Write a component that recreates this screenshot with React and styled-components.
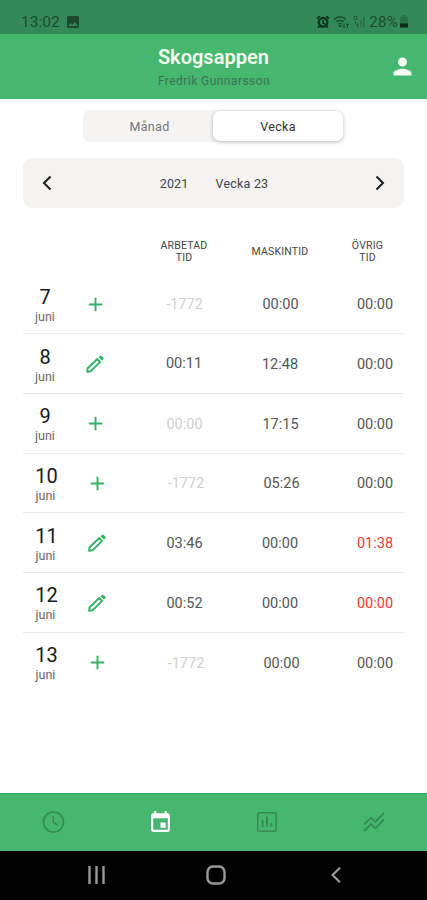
import React from "react";
import styled, { createGlobalStyle } from "styled-components";
import { MdPerson, MdAdd, MdPhoto, MdEvent } from "react-icons/md";

const Global = createGlobalStyle`
  *, *::before, *::after { box-sizing: border-box; }
  body { margin: 0; background: #fff; font-family: Roboto, "Liberation Sans", sans-serif; }
`;

const Screen = styled.div`
  width: 427px;
  height: 900px;
  display: flex;
  flex-direction: column;
  background: #fff;
  overflow: hidden;
`;

const StatusBar = styled.div`
  height: 34px;
  flex: none;
  display: flex;
  align-items: center;
  padding: 9px 18px 0 21px;
  background: #348a57;
  color: #1b4a2d;
  font-size: 15.5px;
  line-height: 20px;
`;

const Clock = styled.span`
  margin-right: 5px;
`;

const StatusIcons = styled.div`
  margin-left: auto;
  display: flex;
  align-items: center;
  gap: 3px;
`;

const Battery = styled.span`
  font-size: 15px;
  letter-spacing: 0.3px;
  margin-right: -2px;
`;

const Header = styled.header`
  height: 65px;
  flex: none;
  display: grid;
  grid-template-columns: 1fr auto 1fr;
  align-items: center;
  padding: 0 14px;
  background: #45b76e;
`;

const Heading = styled.div`
  grid-column: 2;
  padding-left: 1px;
`;

const Title = styled.h1`
  margin: 0;
  font-size: 20px;
  line-height: 26px;
  font-weight: 600;
  letter-spacing: 0;
  color: #f4fff0;
`;

const UserName = styled.div`
  margin-top: 2px;
  font-size: 12px;
  line-height: 18px;
  letter-spacing: 0.45px;
  color: #3d7354;
`;

const Profile = styled.div`
  justify-self: end;
  display: flex;
  margin: 0 -3px 0 0;
  color: #fafff4;
`;

const Content = styled.main`
  flex: 1;
  padding: 11px 23px 0;
`;

const Segments = styled.div`
  display: flex;
  width: 260px;
  height: 32px;
  margin: 0 0 0 60px;
  border-radius: 7px;
  background: #f5f4f3;
`;

const Segment = styled.div`
  flex: ${(p) => (p.$active ? "0 0 130px" : "1")};
  display: flex;
  align-items: center;
  justify-content: center;
  padding-left: ${(p) => (p.$active ? 0 : "3px")};
  font-size: 12.5px;
  letter-spacing: 0.3px;
  border-radius: 7px;
  height: ${(p) => (p.$active ? "30px" : "32px")};
  margin-top: ${(p) => (p.$active ? "1px" : 0)};
  color: ${(p) => (p.$active ? "#333" : "#747474")};
  background: ${(p) => (p.$active ? "#fff" : "transparent")};
  box-shadow: ${(p) => (p.$active ? "0 1px 4px rgba(0,0,0,.25)" : "none")};
`;

const PeriodBar = styled.div`
  display: flex;
  align-items: center;
  justify-content: space-between;
  height: 50px;
  margin-top: 16px;
  padding: 0 19px;
  border-radius: 9px;
  background: #f4f3f2;
`;

const Period = styled.div`
  display: flex;
  gap: 27px;
  padding-left: 1px;
  font-size: 12.5px;
  letter-spacing: 0.2px;
  color: #444;
`;

const rowGrid = `
  display: grid;
  grid-template-columns: 44px 56px 122px 70px 89px;
  align-items: center;
  justify-items: center;
`;

const TableHead = styled.div`
  ${rowGrid}
  height: 66.5px;
  padding-top: 21px;
  font-size: 10.5px;
  line-height: 12px;
  letter-spacing: 0.2px;
  text-align: center;
  color: #444;
`;

const HeadCell = styled.div`
  grid-column: ${(p) => p.$col};
  width: ${(p) => p.$w || "auto"};
  margin-left: ${(p) => p.$indent || 0}px;
`;

const Row = styled.div`
  ${rowGrid}
  height: 59.7px;
  border-bottom: ${(p) => (p.$last ? "none" : "1.5px solid #e9e9e9")};
`;

const DateCell = styled.div`
  padding: 5px 0 0 ${(p) => (p.$wide ? "3px" : 0)};
  text-align: center;
`;

const Day = styled.div`
  font-size: 20px;
  line-height: 21px;
  letter-spacing: -0.1px;
  color: #181818;
`;

const Month = styled.div`
  font-size: 12.5px;
  line-height: 18px;
  color: #666;
  margin-left: ${(p) => (p.$wide ? "-2px" : 0)};
`;

const Action = styled.div`
  display: flex;
  color: #37b165;
  padding: 1px 0 0 ${(p) => p.$pad}px;
`;

const Time = styled.div`
  font-size: 14.5px;
  padding: 2px 0 0 ${(p) => p.$pad || 0}px;
  color: ${(p) => ({ muted: "#cfcfcf", alert: "#f03a30" })[p.$tone] || "#555"};
`;

const TabBar = styled.nav`
  height: 58px;
  flex: none;
  display: grid;
  grid-template-columns: repeat(4, 1fr);
  align-items: center;
  justify-items: center;
  padding-bottom: 1px;
  border-top: 1px solid #2da75b;
  background: #45b76e;
`;

const Tab = styled.div`
  display: flex;
  color: ${(p) => (p.$active ? "#fff" : "#388a55")};
`;

const SystemBar = styled.div`
  height: 49px;
  flex: none;
  display: flex;
  align-items: center;
  justify-content: space-between;
  padding: 0 85px 2px 86px;
  background: #000;
`;

const HomeButton = styled.div`
  display: flex;
  margin-right: 6px;
`;

const rows = [
  { day: 7, edit: false, worked: ["-1772", "muted", 1], machine: ["00:00", 1], other: ["00:00"] },
  { day: 8, edit: true, worked: ["00:11", "", -1], machine: ["12:48", 0], other: ["00:00"] },
  { day: 9, edit: false, worked: ["00:00", "muted", 1], machine: ["17:15", 1], other: ["00:00"] },
  { day: 10, edit: false, worked: ["-1772", "muted", 4], machine: ["05:26", 3], other: ["00:00"] },
  { day: 11, edit: true, worked: ["03:46", "", 1], machine: ["00:00", 0], other: ["01:38", "alert"] },
  { day: 12, edit: true, worked: ["00:52", "", 1], machine: ["00:00", 0], other: ["00:00", "alert"] },
  { day: 13, edit: false, worked: ["-1772", "muted", 4], machine: ["00:00", 3], other: ["00:00"] },
];

const Chevron = ({ dir = "left", w = 10, h = 16, color = "#1c1c1c" }) => (
  <svg width={w} height={h} viewBox="0 0 10 16" fill="none" stroke={color} strokeWidth="2">
    <path d={dir === "left" ? "M8.5 1.5 2 8l6.5 6.5" : "M1.5 1.5 8 8l-6.5 6.5"} />
  </svg>
);

const PencilIcon = () => (
  <svg width="20" height="20" viewBox="0 0 20 20">
    <path d="M12.3 5 2.6 14.2 2.1 17.8l3.7-.6 9.3-9.3z" fill="none" stroke="currentColor" strokeWidth="1.9" strokeLinejoin="round" />
    <path d="M13.5 3.3 15 1.9q.8-.7 1.6 0l1.7 1.7q.7.8 0 1.6L16.8 6.6z" fill="currentColor" />
  </svg>
);

const AlarmIcon = () => (
  <svg width="14" height="14" viewBox="0 0 14 14" fill="none" stroke="#0e341d" strokeWidth="2.4">
    <circle cx="7" cy="7.3" r="4.3" />
    <path d="M7 5v3l2 1M1 3.7 3.7 1.2M13 3.7 10.3 1.2M3.7 10.8 2 12.8M10.3 10.8l1.7 2" strokeWidth="1.7" />
  </svg>
);

const WifiIcon = () => (
  <svg width="17" height="14" viewBox="0 0 17 14" fill="none" stroke="currentColor" strokeWidth="1.3" opacity=".9">
    <path d="M1 4.5Q7 -1 13 4.5M3.2 7Q7 3.4 10.8 7M5.3 9.2Q7 7.5 8.7 9.2" />
    <path d="M7 12.2 5.8 10.7h2.4zM11 8v4.5m-1.5-1.6 1.5 1.6 1.5-1.6M14.5 13V8.5M13 10l1.5-1.5L16 10" strokeWidth="1" />
  </svg>
);

const SignalIcon = () => (
  <svg width="13" height="14" viewBox="0 0 13 14" fill="none" stroke="currentColor" strokeWidth="1" opacity=".65">
    <path d="M1 1.5h3v3H1zM2.5 6v2l3 4.5M5 8v4M8 12.5V5.5M10.8 12.5V2" />
  </svg>
);

const BatteryIcon = () => (
  <svg width="10" height="13" viewBox="0 0 9 13">
    <path d="M3 0h3v1.5h2.5V12.5H.5V1.5H3z" fill="currentColor" opacity=".4" />
    <path d="M.5 8.5h8v4h-8z" fill="#0b2b18" />
  </svg>
);

const ClockIcon = () => (
  <svg width="24" height="24" viewBox="0 0 24 24" fill="none" stroke="currentColor" strokeWidth="1.6">
    <circle cx="12.5" cy="12" r="10" />
    <path d="M12.3 6v6.4l4.6 2.8" />
  </svg>
);

const ChartIcon = () => (
  <svg width="22" height="22" viewBox="0 0 22 22" fill="none" stroke="currentColor" strokeWidth="1.6">
    <rect x="1.8" y="1.8" width="18.4" height="18.4" rx="1.5" />
    <path d="M6.7 9v7M11 5.5V16M15.3 12v4" strokeWidth="1.8" />
  </svg>
);

const TrendIcon = () => (
  <svg width="22" height="20" viewBox="0 0 22 20" fill="none" stroke="currentColor" strokeWidth="1.8">
    <path d="m1 12.5 7-6.8 4.3 4.3L21 1M1 19l7-7 4.3 4.3L21 7.5" />
  </svg>
);

export default function App() {
  return (
    <Screen>
      <Global />
      <StatusBar>
        <Clock>13:02</Clock>
        <MdPhoto size={16} />
        <StatusIcons>
          <AlarmIcon />
          <WifiIcon />
          <SignalIcon />
          <Battery>28%</Battery>
          <BatteryIcon />
        </StatusIcons>
      </StatusBar>
      <Header>
        <Heading>
          <Title>Skogsappen</Title>
          <UserName>Fredrik Gunnarsson</UserName>
        </Heading>
        <Profile><MdPerson size={27} /></Profile>
      </Header>
      <Content>
        <Segments>
          <Segment>Månad</Segment>
          <Segment $active>Vecka</Segment>
        </Segments>
        <PeriodBar>
          <Chevron />
          <Period><span>2021</span><span>Vecka 23</span></Period>
          <Chevron dir="right" />
        </PeriodBar>
        <TableHead>
          <HeadCell $col={3} $w="56px">ARBETAD TID</HeadCell>
          <HeadCell $col={4}>MASKINTID</HeadCell>
          <HeadCell $col={5} $w="40px" $indent={16}>ÖVRIG TID</HeadCell>
        </TableHead>
        {rows.map((r, i) => (
          <Row key={r.day} $last={i === rows.length - 1}>
            <DateCell $wide={r.day > 9}>
              <Day>{r.day}</Day>
              <Month $wide={r.day > 9}>juni</Month>
            </DateCell>
            <Action $pad={r.day > 9 ? 4 : 0}>
              {r.edit ? <PencilIcon /> : <MdAdd size={23} />}
            </Action>
            <Time $tone={r.worked[1]} $pad={r.worked[2]}>{r.worked[0]}</Time>
            <Time $pad={r.machine[1]}>{r.machine[0]}</Time>
            <Time $tone={r.other[1]} $pad={31}>{r.other[0]}</Time>
          </Row>
        ))}
      </Content>
      <TabBar>
        <Tab><ClockIcon /></Tab>
        <Tab $active><MdEvent size={25} /></Tab>
        <Tab><ChartIcon /></Tab>
        <Tab><TrendIcon /></Tab>
      </TabBar>
      <SystemBar>
        <svg width="22" height="18" viewBox="0 0 22 18" stroke="#999" strokeWidth="2.4">
          <path d="M3.5 0v18M10.5 0v18M17.5 0v18" />
        </svg>
        <HomeButton>
          <svg width="20" height="20" viewBox="0 0 20 20" fill="none" stroke="#999" strokeWidth="2.4">
            <rect x="1.5" y="1.5" width="17" height="17" rx="5.5" />
          </svg>
        </HomeButton>
        <Chevron w={12} h={18} color="#999" />
      </SystemBar>
    </Screen>
  );
}
